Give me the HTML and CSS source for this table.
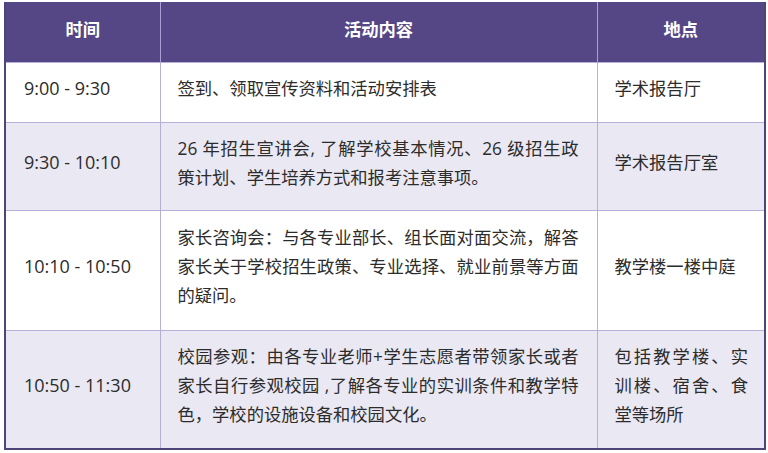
FILE: index.html
```html
<!DOCTYPE html>
<html lang="zh-CN">
<head>
<meta charset="utf-8">
<title>活动安排</title>
<link rel="stylesheet" href="styles.css">
</head>
<body>
<table class="schedule">
  <colgroup>
    <col class="c-time">
    <col class="c-act">
    <col class="c-loc">
  </colgroup>
  <thead>
    <tr>
      <th>时间</th>
      <th>活动内容</th>
      <th>地点</th>
    </tr>
  </thead>
  <tbody>
    <tr class="r1">
      <td class="time">9:00 - 9:30</td>
      <td class="act">签到、领取宣传资料和活动安排表</td>
      <td class="loc">学术报告厅</td>
    </tr>
    <tr class="r2 alt">
      <td class="time">9:30 - 10:10</td>
      <td class="act"><span class="ln">26 年招生宣讲会, 了解学校基本情况、26 级招生政</span><span class="ln last">策计划、学生培养方式和报考注意事项。</span></td>
      <td class="loc">学术报告厅室</td>
    </tr>
    <tr class="r3">
      <td class="time">10:10 - 10:50</td>
      <td class="act"><span class="ln">家长咨询会：与各专业部长、组长面对面交流，解答</span><span class="ln">家长关于学校招生政策、专业选择、就业前景等方面</span><span class="ln last">的疑问。</span></td>
      <td class="loc">教学楼一楼中庭</td>
    </tr>
    <tr class="r4 alt">
      <td class="time">10:50 - 11:30</td>
      <td class="act"><span class="ln">校园参观：由各专业老师+学生志愿者带领家长或者</span><span class="ln">家长自行参观校园 ,了解各专业的实训条件和教学特</span><span class="ln last">色，学校的设施设备和校园文化。</span></td>
      <td class="loc"><span class="ln">包括教学楼、实</span><span class="ln">训楼、宿舍、食</span><span class="ln last">堂等场所</span></td>
    </tr>
  </tbody>
</table>
</body>
</html>
```
FILE: styles.css
```css
html, body {
  margin: 0;
  padding: 0;
  background: #ffffff;
}

body {
  font-family: "Open Sans", "Noto Sans CJK SC", sans-serif;
}

.schedule {
  margin: 2px 0 0 4px;
  width: 760px;
  border-collapse: collapse;
  table-layout: fixed;
  font-size: 17.3px;
  color: #2c2c2c;
  border: 2px solid #4f4479;
  border-top: none;
}

.c-time { width: 155px; }
.c-act { width: 437px; }
.c-loc { width: 168px; }

.schedule th {
  background: #554685;
  color: #ffffff;
  font-weight: bold;
  height: 60px;
  padding: 0 0 6px;
  box-sizing: border-box;
  text-align: center;
  vertical-align: middle;
  border-left: 1px solid #a99fd2;
}

.schedule th:first-child {
  border-left: none;
}

.schedule td {
  box-sizing: border-box;
  border: 1px solid #b6afd9;
  vertical-align: middle;
  line-height: 29px;
  padding: 0 17px 7px;
}

.alt td {
  background: #eae8f3;
}

.r1 td { height: 60px; }
.r2 td { height: 88px; }
.r3 td { height: 120px; }
.r4 td { height: 119px; }

.schedule td.time {
  padding-left: 18px;
  white-space: nowrap;
  font-size: 18px;
}

.schedule td.act {
  padding-left: 17px;
  padding-right: 18px;
  text-align: justify;
}

.schedule td.loc {
  padding-left: 17px;
  padding-right: 16px;
  text-align: justify;
}

.ln {
  display: block;
  white-space: nowrap;
  text-align: justify;
  text-align-last: justify;
}

.ln.last {
  text-align-last: auto;
}
```
